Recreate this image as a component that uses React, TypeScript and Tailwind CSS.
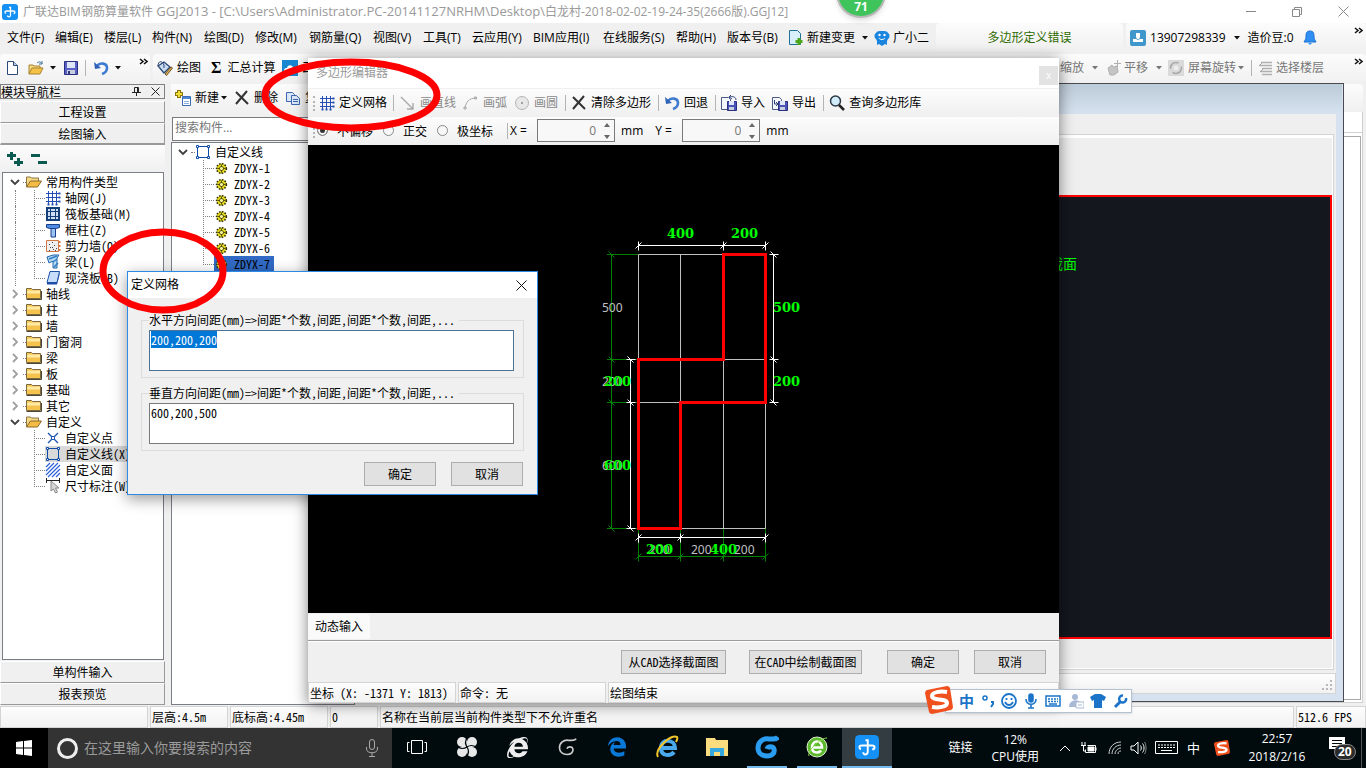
import { useEffect, useRef } from "react";
import type { ReactNode } from "react";
import { FaInternetExplorer, FaEdgeLegacy } from "react-icons/fa6";

const ui = "font-['Open_Sans','Noto_Sans_CJK_SC',sans-serif]";
const song = "font-['Noto_Sans_Mono_CJK_SC','Noto_Sans_CJK_SC',monospace]";
const bar = "bg-linear-to-b from-[#fcfcfc] to-[#f0f0f0]";
const cell = "border border-[#d4d4d4] bg-linear-to-b from-[#fdfdfd] to-[#f2f2f2]";

const menus = [
  { text: "文件(F)", w: "w-[48px]" },
  { text: "编辑(E)", w: "w-[49px]" },
  { text: "楼层(L)", w: "w-[48px]" },
  { text: "构件(N)", w: "w-[52px]" },
  { text: "绘图(D)", w: "w-[51px]" },
  { text: "修改(M)", w: "w-[54px]" },
  { text: "钢筋量(Q)", w: "w-[64px]" },
  { text: "视图(V)", w: "w-[50px]" },
  { text: "工具(T)", w: "w-[49px]" },
  { text: "云应用(Y)", w: "w-[61px]" },
  { text: "BIM应用(I)", w: "w-[70px]" },
  { text: "在线服务(S)", w: "w-[73px]" },
  { text: "帮助(H)", w: "w-[51px]" },
  { text: "版本号(B)", w: "w-[61px]" },
];

type Node = { text: string; icon?: string; children?: Node[]; selected?: boolean };

const tree: Node[] = [
  {
    text: "常用构件类型",
    children: [
      { text: "轴网(J)", icon: "grid" },
      { text: "筏板基础(M)", icon: "raft" },
      { text: "框柱(Z)", icon: "column" },
      { text: "剪力墙(Q)", icon: "wall" },
      { text: "梁(L)", icon: "beam" },
      { text: "现浇板(B)", icon: "slab" },
    ],
  },
  { text: "轴线" },
  { text: "柱" },
  { text: "墙" },
  { text: "门窗洞" },
  { text: "梁" },
  { text: "板" },
  { text: "基础" },
  { text: "其它" },
  {
    text: "自定义",
    children: [
      { text: "自定义点", icon: "point" },
      { text: "自定义线(X)", icon: "frame", selected: true },
      { text: "自定义面", icon: "hatch" },
      { text: "尺寸标注(W)", icon: "dimension" },
    ],
  },
];

const members = ["ZDYX-1", "ZDYX-2", "ZDYX-3", "ZDYX-4", "ZDYX-5", "ZDYX-6", "ZDYX-7"];

function Svg({ size = 16, children }: { size?: number; children: ReactNode }) {
  return (
    <svg width={size} height={size} viewBox="0 0 16 16" fill="none" className="shrink-0" aria-hidden="true">
      {children}
    </svg>
  );
}

function Icon({ name, size = 16 }: { name: string; size?: number }) {
  switch (name) {
    case "grid":
      return (
        <Svg size={size}>
          <path d="M3.500 1v14M7.500 1v14M11.500 1v14M1 3.500h14M1 7.500h14M1 11.500h14" stroke="#2450b4" />
          <path d="M2.500 14.500h2M6.500 14.500h2M10.500 14.500h2M14.500 2.500v2M14.500 6.500v2M14.500 10.500v2" stroke="#2450b4" strokeWidth="2" />
        </Svg>
      );
    case "raft":
      return (
        <Svg size={size}>
          <path d="M2 2h12v12H2z" fill="#cfe0f5" stroke="#153f78" strokeWidth="2" />
          <path d="M5.500 5.500h5v5h-5zM5.500 2v12M10.500 2v12M2 5.500h12M2 10.500h12" stroke="#153f78" />
        </Svg>
      );
    case "column":
      return (
        <Svg size={size}>
          <path d="M1.500 2.500h13v3l-3 1h-7l-3-1z" fill="#4f8be0" stroke="#173f8c" />
          <path d="M6 6.500h4.500V15H6z" fill="#9cc3f3" stroke="#173f8c" />
        </Svg>
      );
    case "wall":
      return (
        <Svg size={size}>
          <path d="M1.500 2.500h12v11h-12z" fill="#eeeeee" stroke="#d07844" />
          <path d="M14 4h1.500M14 8h1.500M14 12h1.500" stroke="#d07844" strokeWidth="2" />
          <path d="M4 6.500h1M7 4.500h1M9 7.500h1M5 9.500h1M8 11.500h1M4 12.500h1M11 10.500h1M10 12.500h1M7 9.500h1" stroke="#444" />
        </Svg>
      );
    case "beam":
      return (
        <Svg size={size}>
          <path d="M2 3l6-2h6l-2 3v10H8V7L4 9z" fill="#b9dcf5" stroke="#2165a8" />
          <path d="M4 5l8-3M8 8l4-3M9 13l4-4" stroke="#2d7cc4" strokeWidth="1.500" />
        </Svg>
      );
    case "slab":
      return (
        <Svg size={size}>
          <path d="M5 1.500h9.500l-2.500 11H2z" fill="#c6defa" stroke="#1d4fa8" />
          <path d="M2 12h10l2.500-10v3L12 14.500H2z" fill="#1d4fa8" />
        </Svg>
      );
    case "point":
      return (
        <Svg size={size}>
          <path d="M3 3l4 4M13 3L9 7M3 13l4-4M13 13L9 9" stroke="#1d55b0" strokeWidth="1.300" />
          <path d="M6.500 6.500h3v3h-3z" fill="#fff" stroke="#1d55b0" />
        </Svg>
      );
    case "frame":
      return (
        <Svg size={size}>
          <path d="M2.500 2.500h11v11h-11z" stroke="#0e4ca8" />
          <path d="M1.500 1.500h2v2h-2zM12.500 1.500h2v2h-2zM1.500 12.500h2v2h-2zM12.500 12.500h2v2h-2z" fill="#fff" stroke="#0e4ca8" />
        </Svg>
      );
    case "hatch":
      return (
        <Svg size={size}>
          <path d="M1 5l4-4M1 9l8-8M1 13L13 1M3 15L15 3M7 15l8-8M11 15l4-4" stroke="#2f63d8" strokeWidth="1.200" />
        </Svg>
      );
    case "dimension":
      return (
        <Svg size={size}>
          <path d="M1.500 0v5M14.500 0v5M1 2.500h14" stroke="#222" />
          <path d="M6 3v10l2.500-2 2 4 2-1-2-4h3.500z" fill="#d8d8d8" stroke="#888" />
        </Svg>
      );
    case "folder":
      return (
        <Svg size={size}>
          <path d="M.5 2.500h5l1 1h8v9H.5z" fill="#f3c34d" stroke="#7d6a3c" />
          <path d="M1 4.500h13v3H1z" fill="#ffe9a2" />
          <path d="M.5 13.500h15V5" stroke="#4a4436" />
        </Svg>
      );
    case "folder-open":
      return (
        <Svg size={size}>
          <path d="M.5 13V3h4l1 1h7v3" fill="#f7da88" stroke="#8a7440" />
          <path d="M.5 13l4-6h11l-4 6z" fill="#f3bd45" stroke="#8a6a2a" />
        </Svg>
      );
    case "open":
      return (
        <Svg size={size}>
          <path d="M1 14V5h4l1 1h6v3" fill="#f7da88" stroke="#a8822a" />
          <path d="M1 14l3-6h11l-3 6z" fill="#f5c24a" stroke="#a8822a" />
          <path d="M9 3c2-2 4-1 5 1M14 1v3h-3" stroke="#3a6f9c" />
        </Svg>
      );
    case "new":
      return (
        <Svg size={size}>
          <path d="M3.500 1.500h6l4 4v9h-10z" fill="#fff" stroke="#2b4a78" />
          <path d="M9.500 1.500v4h4" fill="#b9cce8" stroke="#2b4a78" />
        </Svg>
      );
    case "save":
      return (
        <Svg size={size}>
          <path d="M1.500 1.500h13v13h-13z" fill="#5a62c8" stroke="#2a2f80" />
          <path d="M4 2h8v6H4z" fill="#dfe6f8" />
          <path d="M4 10h8v4H4z" fill="#c8cfdf" />
          <path d="M5 11h2v3H5z" fill="#333a80" />
        </Svg>
      );
    case "undo":
      return (
        <Svg size={size}>
          <path d="M4 6c3-4 10-3 10 2 0 3-2 5-5 6" stroke="#3f7bd0" strokeWidth="2.600" />
          <path d="M1 2l1 7 6-1z" fill="#2f62b8" />
        </Svg>
      );
    case "bucket":
      return (
        <Svg size={size}>
          <path d="M1 6l6-4 6 5-6 6z" fill="#c9dcf2" stroke="#2a4774" strokeWidth="1.300" />
          <path d="M1 6c0-5 4-6 6-1v3" stroke="#2a4774" />
          <path d="M15.500 8l-6 7.500L8 14l6-7z" fill="#e8b348" stroke="#68502a" />
        </Svg>
      );
    case "cloud":
      return (
        <Svg size={size}>
          <path d="M0 0h16v16H0z" fill="#1687d0" />
          <path d="M2 11c0-3 2-3 3-3 1-4 6-3 6 0 3 0 4 4 1 5H4c-1 0-2-1-2-2z" fill="#fff" />
        </Svg>
      );
    case "create":
      return (
        <Svg size={size}>
          <path d="M4 0v8M0 4h8" stroke="#8a7410" strokeWidth="4" />
          <path d="M4 1v6M1 4h6" stroke="#f2dc3c" strokeWidth="2" />
          <path d="M7.500 6.500h8v9h-8z" fill="#fff" stroke="#3a6ab8" />
          <path d="M8 7h7v2H8z" fill="#4f86d8" />
          <path d="M9 11.500h5M9 13.500h5" stroke="#8aaee0" />
        </Svg>
      );
    case "cross":
      return (
        <Svg size={size}>
          <path d="M2 2l12 12M13 1L2 14" stroke="#333" strokeWidth="2" />
        </Svg>
      );
    case "copy":
      return (
        <Svg size={size}>
          <path d="M1.500 2.500h6l2 2v7h-8z" fill="#dbe8fa" stroke="#3d68b0" />
          <path d="M6.500 5.500h5l3 3v6h-8z" fill="#dbe8fa" stroke="#3d68b0" />
          <path d="M8 9.500h5M8 11.500h5" stroke="#3d68b0" />
        </Svg>
      );
    case "line":
      return (
        <Svg size={size}>
          <path d="M1 2l12 12M13 8v6H7" stroke="#a8a8a8" strokeWidth="1.400" />
        </Svg>
      );
    case "arc":
      return (
        <Svg size={size}>
          <path d="M2 13C3 7 6 3 13 3" stroke="#a8a8a8" />
          <path d="M1 12h2v2H1zM11.500 2h2v2h-2z" stroke="#a8a8a8" />
        </Svg>
      );
    case "circle":
      return (
        <Svg size={size}>
          <circle cx="8" cy="8" r="6.500" fill="#e8e8e8" stroke="#b4b4b4" />
          <path d="M7 7h2v2H7z" fill="#a0a0a0" />
        </Svg>
      );
    case "import":
    case "export":
      return (
        <Svg size={size}>
          <path d="M.5 2.500h7l2 2v10h-9z" fill="#f4f7fc" stroke="#4a5a84" />
          <path d="M6.500 6.500h9v9h-9z" fill="#4a52b8" stroke="#2a2f80" />
          <path d="M8 6h5v4H8z" fill="#dfe6f8" />
          <path d="M8 12h5v3H8z" fill="#c8cfdf" />
          {name === "import" ? (
            <path d="M15 5c0-3-3-4-6-3M10 0L8 2l3 2" stroke="#30427a" />
          ) : (
            <path d="M2.500 5v4h4M4 7l2 2-2 2" stroke="#30427a" />
          )}
        </Svg>
      );
    case "search":
      return (
        <Svg size={size}>
          <circle cx="6.500" cy="6" r="5" fill="#d3ecfa" stroke="#2c3a48" strokeWidth="1.500" />
          <path d="M10 10l5 5" stroke="#222" strokeWidth="2.500" />
        </Svg>
      );
    case "change":
      return (
        <Svg size={size}>
          <path d="M1.500.5h8l3 3v11h-11z" fill="#d9effc" stroke="#1f6f9c" />
          <path d="M11 8v7M7.500 11.500h7" stroke="#4fa81c" strokeWidth="3" />
        </Svg>
      );
    case "mascot":
      return (
        <Svg size={size}>
          <path d="M2 3c1-2 3-2 6-2s5 0 6 2c2 1 2 5 0 6l-1 2v4l-2-1-3 2-3-2-2 1v-4L2 9C0 8 0 4 2 3z" fill="#1a86e0" />
          <circle cx="5.500" cy="5" r="1.200" fill="#fff" />
          <circle cx="10.500" cy="5" r="1.200" fill="#fff" />
          <path d="M5 8c1 2 5 2 6 0" stroke="#fff" />
        </Svg>
      );
    case "account":
      return (
        <Svg size={size}>
          <rect width="16" height="16" rx="2" fill="#3f97cb" />
          <path d="M6 3h4v4l-1 2H7L6 7zM3 9h3l2 1 2-1h3v3H3z" fill="#fff" />
        </Svg>
      );
    case "bell":
      return (
        <Svg size={size}>
          <path d="M8 1c4 0 4 3 4 6 0 2 1 3 2 5H2c1-2 2-3 2-5 0-3 0-6 4-6z" fill="#2f8ff5" stroke="#1b6fcf" />
          <path d="M6 13h4l-2 2z" fill="#2f8ff5" />
        </Svg>
      );
    case "pan":
      return (
        <Svg size={size}>
          <path d="M2 8l4-3 1 2 4-1 1 6-4 3H4z" fill="#c4c4c4" stroke="#b0b0b0" />
          <path d="M11.500 0v7M8 3.500h7" stroke="#b0b0b0" />
        </Svg>
      );
    case "rotate":
      return (
        <Svg size={size}>
          <path d="M0 0h16v16H0z" fill="#dadada" />
          <circle cx="8" cy="8" r="5.500" stroke="#a8a8a8" strokeWidth="1.500" strokeDasharray="12 4" />
          <path d="M6 6h4v4H6z" fill="#eee" />
        </Svg>
      );
    case "floors":
      return (
        <Svg size={size}>
          <path d="M3 2.500h11M1 5.500h13M4 8.500h10M2 11.500h12M4 14.500h10" stroke="#b0b0b0" strokeWidth="1.500" />
          <path d="M4 3L1 6M5 9l-3 3" stroke="#a8a8a8" />
        </Svg>
      );
    case "app":
      return (
        <Svg size={size}>
          <rect width="16" height="16" rx="3" fill="#1590f5" />
          <path d="M7 3.500h1.500V11c0 2.500-3 2.500-3 .5M4 9.500C2.500 9 2.500 7 4.500 7h7c2 0 2 2.500 0 2.500" stroke="#fff" strokeWidth="1.300" />
        </Svg>
      );
    case "gear":
      return (
        <Svg size={size}>
          <circle cx="8" cy="8" r="6" fill="#e8dc20" stroke="#3c3a08" strokeWidth="2" strokeDasharray="2 1.500" />
          <circle cx="8" cy="8" r="2.500" fill="#fff9a0" stroke="#3c3a08" />
          <path d="M8 3v3M8 10v3M3 8h3M10 8h3" stroke="#3c3a08" />
        </Svg>
      );
    default:
      return null;
  }
}

function Caret({ dim = false }: { dim?: boolean }) {
  return (
    <svg width="6" height="4" viewBox="0 0 6 4" className="shrink-0" aria-hidden="true">
      <path d="M0 0h6L3 3.500z" fill={dim ? "#777" : "#111"} />
    </svg>
  );
}

function More() {
  return (
    <svg width="9" height="8" viewBox="0 0 9 8" fill="none" className="shrink-0" aria-hidden="true">
      <path d="M1 1l3 2.500L1 6M5 1l3 2.500L5 6" stroke="#111" strokeWidth="1.500" />
    </svg>
  );
}

function Sep() {
  return <span className="h-4 w-px shrink-0 bg-[#b4b4b4]" />;
}

function Grip() {
  return <span className="h-[15px] w-0 shrink-0 border-l-2 border-dotted border-[#b4b4b4]" />;
}

function Chevron({ open }: { open: boolean }) {
  return (
    <svg width="10" height="10" viewBox="0 0 10 10" fill="none" className="shrink-0" aria-hidden="true">
      <path d={open ? "M1 3l4 4 4-4" : "M3 1l4 4-4 4"} stroke={open ? "#404040" : "#a0a0a0"} strokeWidth="1.800" />
    </svg>
  );
}

function Elbow({ last }: { last: boolean }) {
  return (
    <svg width="11" height="16" viewBox="0 0 11 16" fill="none" className="shrink-0" aria-hidden="true">
      <path d={last ? "M.5 0v8.500" : "M.5 0v16"} stroke="#808080" strokeDasharray="1 1" />
      <path d="M0 8.500h11" stroke="#808080" strokeDasharray="1 1" />
    </svg>
  );
}

function Tool({ icon, text, dim = false }: { icon: string; text: string; dim?: boolean }) {
  return (
    <button className={`flex shrink-0 items-center gap-1 whitespace-nowrap ${dim ? "text-[#8a8a8a]" : "text-black"}`}>
      <Icon name={icon} />
      {text}
    </button>
  );
}

function TitleBar() {
  return (
    <header className="flex h-[23px] items-center bg-white pl-[2px] text-[#999]">
      <Icon name="app" />
      <h1 className="ml-[5px] flex-1 whitespace-nowrap">
        广联达BIM钢筋算量软件
        <span className="text-[13px]"> GGJ2013 - [C:\Users\Administrator.PC-20141127NRHM\Desktop\</span>
        白龙村-2018-02-02-19-24-35(2666版).GGJ12]
      </h1>
      <div className="flex h-[20px]">
        <button aria-label="最小化" className="flex w-[46px] items-center justify-center">
          <span className="h-px w-[10px] bg-[#888]" />
        </button>
        <button aria-label="还原" className="flex w-[46px] items-center justify-center">
          <svg width="10" height="10" fill="none" stroke="#888"><path d="M.5 2.500h7v7h-7zM2.500 2.500v-2h7v7h-2" /></svg>
        </button>
        <button aria-label="关闭" className="flex w-[46px] items-center justify-center">
          <svg width="11" height="11" fill="none" stroke="#888"><path d="M.5.5l10 10M10.500.5l-10 10" /></svg>
        </button>
      </div>
    </header>
  );
}

function MenuBar() {
  return (
    <nav className="flex h-[31px] items-center bg-[#f0f0f0] pb-px pl-[7px] whitespace-nowrap">
      {menus.map((m) => (
        <button key={m.text} className={`shrink-0 text-left ${m.w}`}>
          {m.text}
        </button>
      ))}
      <button className="flex items-center gap-[3px]">
        <Icon name="change" />
        新建变更
        <span className="ml-1"><Caret /></span>
      </button>
      <button className="ml-[6px] flex items-center gap-[3px]">
        <Icon name="mascot" />
        广小二
      </button>
      <div className={`ml-[7px] flex h-full w-[187px] items-center justify-center rounded text-[#2f6b00] ${bar}`}>
        多边形定义错误
      </div>
      <div className={`ml-[3px] flex h-full flex-1 items-center rounded pl-1 ${bar}`}>
        <button className="flex items-center gap-1">
          <Icon name="account" />
          <span>13907298339</span>
          <span className="ml-1"><Caret /></span>
        </button>
        <button className="ml-2 flex items-center gap-2">
          造价豆:0
          <Icon name="bell" />
        </button>
        <span className="ml-auto self-start pt-1 pr-[3px]"><More /></span>
      </div>
    </nav>
  );
}

function MainToolbar() {
  return (
    <div className="flex h-[30px] items-center bg-[#f0f0f0] whitespace-nowrap">
      <div className={`flex h-full w-[150px] shrink-0 items-center rounded pb-[3px] pl-1 ${bar}`}>
        <button aria-label="新建文件"><Icon name="new" /></button>
        <button aria-label="打开" className="ml-2 flex items-center gap-[6px]"><Icon name="open" /><Caret /></button>
        <button aria-label="保存" className="mr-[6px] ml-[7px]"><Icon name="save" /></button>
        <Sep />
        <button aria-label="撤销" className="ml-[7px] flex items-center gap-[6px]"><Icon name="undo" /><Caret /></button>
        <span className="mr-[2px] ml-auto self-start pt-1"><More /></span>
      </div>
      <div className={`ml-[3px] flex h-full flex-1 items-center rounded pb-[3px] pl-1 ${bar}`}>
        <Tool icon="bucket" text="绘图" />
        <button className="ml-[10px] flex items-center gap-[6px]">
          <span className="font-['Liberation_Serif',serif] text-[16px] font-bold">Σ</span>
          汇总计算
        </button>
        <button className="ml-[6px] flex items-center gap-1"><Icon name="cloud" />云计算</button>
        <div className="ml-auto flex items-center pr-[42px] text-[#777]">
          <button className="flex items-center gap-2">缩放<Caret dim /></button>
          <button className="ml-2 flex items-center gap-2"><span className="flex items-center gap-[2px]"><Icon name="pan" />平移</span><Caret dim /></button>
          <button className="mr-[7px] ml-[6px] flex items-center gap-[2px]"><span className="flex items-center gap-1"><Icon name="rotate" />屏幕旋转</span><Caret dim /></button>
          <Sep />
          <button className="ml-[6px] flex items-center gap-[2px]"><Icon name="floors" />选择楼层</button>
        </div>
      </div>
      <span className="-ml-3 self-start pt-1 pr-[3px]"><More /></span>
    </div>
  );
}

function Navigator() {
  const tab = "h-[22px] border border-t-white border-l-white border-r-[#999] border-b-[#999] bg-[#f0f0f0]";
  return (
    <aside className={`flex w-[165px] shrink-0 flex-col bg-[#f0f0f0] ${song}`}>
      <div className="flex h-[15px] items-center border border-[#808080] pr-1 leading-[14px]">
        <h2 className="flex-1">模块导航栏</h2>
        <svg width="9" height="9" fill="none" stroke="#222"><path d="M2.500 5V.5h4V5M0 5.500h9M4.500 5.500V9M5.500 1v4" /></svg>
        <svg width="9" height="9" className="ml-[10px]" fill="none" stroke="#222"><path d="M.5.5l8 8M8.500.5l-8 8" /></svg>
      </div>
      <button className={`mt-[2px] ${tab}`}>工程设置</button>
      <button className={`${tab} border-b-2`}>绘图输入</button>
      <div className={`flex h-[27px] items-center gap-2 pl-[7px] ${bar}`}>
        <button aria-label="全部展开">
          <svg width="16" height="16" fill="none" stroke="#0b5a50" strokeWidth="3"><path d="M4.500 1v8M0 4.500h9M11.500 7v8M7 11.500h9" /></svg>
        </button>
        <button aria-label="全部折叠">
          <svg width="16" height="16" fill="none" stroke="#0b5a50" strokeWidth="3"><path d="M0 4.500h9M7 11.500h9" /></svg>
        </button>
      </div>
      <ul className="mr-px ml-[2px] flex-1 overflow-hidden border border-[#7a7f86] bg-white pt-[1px] whitespace-nowrap">
        {tree.map((n, i) => (
          <li key={n.text + i}>
            <div className="flex h-4 items-center pl-[7px]">
              <Chevron open={!!n.children} />
              <span className="ml-[3px] w-[3px] border-t border-dotted border-[#808080]" />
              <Icon name={n.children ? "folder-open" : "folder"} />
              <span className="ml-1">{n.text}</span>
            </div>
            {n.children && (
              <ul>
                {n.children.map((c, k) => (
                  <li key={c.text} className="flex h-4 pl-[12px]">
                    <span className={`w-[19px] shrink-0 ${i === 0 ? "border-l border-dotted border-[#808080]" : ""}`} />
                    <Elbow last={k === n.children!.length - 1} />
                    <span className={`flex items-center gap-1 leading-4 ${c.selected ? "bg-[#d9d9d9]" : ""}`}>
                      <Icon name={c.icon!} />
                      {c.text}
                    </span>
                  </li>
                ))}
              </ul>
            )}
          </li>
        ))}
      </ul>
      <button className={`mt-px ${tab}`}>单构件输入</button>
      <button className={`mb-px ${tab}`}>报表预览</button>
    </aside>
  );
}

function Members() {
  return (
    <section className="ml-[6px] flex w-[184px] shrink-0 flex-col">
      <div className={`flex h-[29px] items-center overflow-hidden pb-[2px] pl-1 ${bar}`}>
        <Tool icon="create" text="新建" />
        <span className="ml-[2px]"><Caret /></span>
        <span className="ml-[7px]"><Tool icon="cross" text="删除" /></span>
        <span className="ml-[7px]"><Tool icon="copy" text="复制" /></span>
      </div>
      <input
        aria-label="搜索构件"
        placeholder="搜索构件..."
        className="mt-1 ml-px h-6 border border-[#7a7a7a] bg-white px-[2px] pb-1 placeholder:text-[#777]"
      />
      <div className={`mt-px mb-px flex-1 border border-[#7a7f86] bg-white pt-px ${song}`}>
        <div className="flex h-4 items-center pl-[6px]">
          <Chevron open />
          <span className="ml-[3px] w-1 border-t border-dotted border-[#808080]" />
          <Icon name="frame" />
          <span className="ml-1">自定义线</span>
        </div>
        <ul>
          {members.map((m, i) => (
            <li key={m} className="flex h-4 pl-[31px]">
              <Elbow last={i === members.length - 1} />
              <span className={`flex items-center gap-[6px] pr-1 pl-px leading-4 ${i === 6 ? "bg-[#316ac5]" : ""}`}>
                <Icon name="gear" size={13} />
                {m}
              </span>
            </li>
          ))}
        </ul>
      </div>
    </section>
  );
}

function Backdrop() {
  return (
    <section className="mr-[3px] ml-[3px] flex flex-1 flex-col pb-[3px]">
      <div className={`h-[28px] rounded ${bar}`} />
      <div className="flex flex-1 flex-col border-r border-b border-[#d0d0d0] bg-white">
        <div className="h-[21px] border-b border-[#d0d0d0]" />
        <div className="mt-[3px] mr-px mb-[2px] flex-1 border border-[#a8a8a8] bg-white" />
      </div>
    </section>
  );
}

function SectionWindow() {
  return (
    <section className="absolute top-[83px] right-[22px] bottom-[66px] left-[1000px] flex flex-col border border-[#4a4a50] bg-[#d6e2f0] pr-[7px] pb-[7px]">
      <div className="-mr-[6px] h-[30px] bg-linear-to-b from-[#bccbd8] to-[#d6e2f0]" />
      <div className="flex flex-1 flex-col bg-[#efefef] pt-5">
        <div className="mr-[2px] flex flex-1 flex-col border border-[#d4d4d4] bg-white pt-[3px] pr-px pb-px">
          <div className="flex flex-1 flex-col bg-[#efefef] pt-[57px] pb-[29px]">
            <div className="flex-1 border-2 border-[#f00] bg-[#14171e] pt-[57px] pl-[45px] text-[14px] leading-5 text-[#0f0]">
              截面
            </div>
          </div>
        </div>
      </div>
      <div className="bg-[#efefef] pt-[3px]">
        <div className={`flex h-[21px] items-end justify-end p-[2px] ${cell}`}>
          <svg width="11" height="11" fill="#b8b8b8"><path d="M8 0h2v2H8zM4 4h2v2H4zM8 4h2v2H8zM0 8h2v2H0zM4 8h2v2H4zM8 8h2v2H8z" /></svg>
        </div>
      </div>
    </section>
  );
}

function Ticks({ points, color, flip = false }: { points: number[][]; color: string; flip?: boolean }) {
  return (
    <g stroke={color}>
      {points.map(([x, y]) => (
        <path key={`${x},${y}`} d={flip ? `M${x - 4} ${y}h9M${x - 3} ${y - 3}l6 6` : `M${x} ${y - 4}v9M${x - 3} ${y + 3}l6-6`} />
      ))}
    </g>
  );
}

function Drawing() {
  return (
    <svg viewBox="308 145 751 468" className="h-[468px] w-full bg-black" fill="none" role="img" aria-label="多边形截面">
      <path d="M611.5 254v275M607 254.500h31M607 359.500h31M607 402.500h31M607 528.500h31M638 556.500h128M638.500 528v32M680.500 528v32M723.500 528v32M765.500 528v32" stroke="#008000" />
      <Ticks color="#008000" points={[[638.5, 556.5], [680.5, 556.5], [723.5, 556.5], [765.5, 556.5]]} />
      <Ticks color="#008000" flip points={[[611.5, 254.5], [611.5, 359.5], [611.5, 402.5], [611.5, 528.5]]} />
      <path d="M638.5 254.500h127v274h-127zM680.500 254v274M723.500 254v274M638 359.500h127M638 402.500h127" stroke="#c0c0c0" />
      <path d="M638 245.500h128M773.500 254v149M630.500 359v170M638 537.500h128" stroke="#fff" />
      <Ticks color="#fff" points={[[638.5, 245.5], [723.5, 245.5], [765.5, 245.5], [638.5, 537.5], [680.5, 537.5], [765.5, 537.5]]} />
      <Ticks color="#fff" flip points={[[773.5, 254.5], [773.5, 359.5], [773.5, 402.5], [630.5, 359.5], [630.5, 402.5], [630.5, 528.5]]} />
      <path d="M723.500 254.500h42v148h-85v126h-42v-169h85z" stroke="#f00" strokeWidth="3" />
      <g fill="#c0c0c0" className="font-['Noto_Sans',sans-serif] text-[12px]">
        <text x="602" y="312">500</text>
        <text x="602" y="386">200</text>
        <text x="602" y="470">600</text>
        <text x="649" y="554">200</text>
        <text x="691" y="554">200</text>
        <text x="734" y="554">200</text>
      </g>
      <g fill="#0f0" className="font-['DejaVu_Serif',serif] text-[13px] font-bold">
        <text x="667" y="238">400</text>
        <text x="731" y="238">200</text>
        <text x="773" y="312">500</text>
        <text x="773" y="386">200</text>
        <text x="604" y="386">200</text>
        <text x="604" y="470">600</text>
        <text x="646" y="554">200</text>
        <text x="710" y="554">400</text>
      </g>
    </svg>
  );
}

function Coord({ label }: { label: string }) {
  return (
    <label className="flex items-center gap-[6px]">
      <span className="w-[21px]">{label} =</span>
      <span className="flex h-[23px] w-[78px] items-center border border-[#7a7a7a] bg-[#f8f8f8] pr-1">
        <input defaultValue="0" className="w-0 flex-1 bg-transparent pr-2 text-right text-[#777]" />
        <svg width="6" height="16" fill="#666"><path d="M0 4h6L3 0zM0 12h6L3 16z" /></svg>
      </span>
      mm
    </label>
  );
}

function Radio({ text, checked = false }: { text: string; checked?: boolean }) {
  return (
    <label className="flex items-center gap-[9px]">
      <input
        type="radio"
        name="mode"
        defaultChecked={checked}
        className="size-[11px] appearance-none rounded-full border border-[#888] bg-[#f8f8f8] checked:bg-[#333] checked:shadow-[inset_0_0_0_2px_#f8f8f8]"
      />
      {text}
    </label>
  );
}

const winButton = "h-6 border border-[#adadad] bg-[#e1e1e1]";

function PolygonEditor() {
  return (
    <section className="absolute top-[58px] left-[308px] w-[751px] bg-[#f0f0f0] whitespace-nowrap shadow-[0_2px_14px_rgba(0,0,0,0.5)]">
      <div className="flex h-[30px] items-center justify-between bg-white pr-px pl-2 text-[#999]">
        <h2>多边形编辑器</h2>
        <button aria-label="关闭编辑器" className="mt-1 size-[19px] bg-[#e3e3e3] text-[10px] leading-[14px] text-white">x</button>
      </div>
      <div className={`mt-px flex h-[28px] items-center pl-[5px] ${bar}`}>
        <Grip />
        <span className="mr-[6px] ml-1"><Tool icon="grid" text="定义网格" /></span>
        <Sep />
        <span className="ml-[6px]"><Tool icon="line" text="画直线" dim /></span>
        <span className="ml-[7px]"><Tool icon="arc" text="画弧" dim /></span>
        <span className="mr-[7px] ml-[7px]"><Tool icon="circle" text="画圆" dim /></span>
        <Sep />
        <span className="mr-[7px] ml-[5px]"><Tool icon="cross" text="清除多边形" /></span>
        <Sep />
        <span className="mr-[7px] ml-[5px]"><Tool icon="undo" text="回退" /></span>
        <Sep />
        <span className="ml-[5px]"><Tool icon="import" text="导入" /></span>
        <span className="mr-[7px] ml-[7px]"><Tool icon="export" text="导出" /></span>
        <Sep />
        <span className="ml-[5px]"><Tool icon="search" text="查询多边形库" /></span>
      </div>
      <div className={`flex h-[28px] items-center pb-px pl-[5px] ${bar}`}>
        <Grip />
        <div className={`ml-[2px] flex items-center gap-[10px] ${song}`}>
          <Radio text="不偏移" checked />
          <Radio text="正交" />
          <Radio text="极坐标" />
        </div>
        <div className="ml-[14px] flex items-center gap-[2px]">
          <Sep />
          <Coord label="X" />
        </div>
        <div className="ml-3">
          <Coord label="Y" />
        </div>
      </div>
      <Drawing />
      <div className="flex h-[28px] items-start border-b border-[#9a9a9a] pt-px">
        <button className="h-[25px] rounded-t bg-[#fafafa] px-[7px]">动态输入</button>
      </div>
      <div className={`flex h-[41px] items-center justify-end border-t border-white pr-[13px] ${song}`}>
        <button className={`${winButton} w-[105px]`}>从CAD选择截面图</button>
        <button className={`${winButton} ml-[23px] w-[113px]`}>在CAD中绘制截面图</button>
        <button className={`${winButton} ml-[25px] w-[72px]`}>确定</button>
        <button className={`${winButton} ml-[15px] w-[72px]`}>取消</button>
      </div>
      <div className={`flex h-[21px] gap-[2px] ${song}`}>
        <div className={`w-[148px] pl-px leading-5 ${cell}`}>坐标 (X: -1371 Y: 1813)</div>
        <div className={`w-[148px] pl-px leading-5 ${cell}`}>命令: 无</div>
        <div className={`flex-1 pl-px leading-5 ${cell}`}>绘图结束</div>
      </div>
    </section>
  );
}

function GridDialog() {
  const first = useRef<HTMLTextAreaElement>(null);

  useEffect(() => {
    first.current?.focus();
    first.current?.select();
  }, []);

  const box = "mt-[2px] block h-[41px] w-full resize-none border bg-white px-px py-px leading-[15px] outline-none selection:bg-[#0078d7] selection:text-white";
  return (
    <section
      role="dialog"
      aria-label="定义网格"
      className={`absolute top-[271px] left-[127px] w-[411px] border border-[#2a8ae6] bg-[#f0f0f0] whitespace-nowrap shadow-[0_4px_14px_rgba(0,0,0,0.4)] ${song}`}
    >
      <div className={`flex h-[26px] items-center justify-between bg-white pr-[10px] pl-[3px] ${ui}`}>
        <h2>定义网格</h2>
        <button aria-label="关闭">
          <svg width="11" height="11" fill="none" stroke="#111"><path d="M.5.5l10 10M10.500.5l-10 10" /></svg>
        </button>
      </div>
      <div className="px-[13px] pt-[14px] pb-2">
        <fieldset className="h-[66px] border border-[#dcdcdc] pr-[9px] pl-[7px]">
          <legend className="pr-1 leading-4">
            <label htmlFor="horizontal">水平方向间距(mm)=&gt;间距*个数,间距,间距*个数,间距,...</label>
          </legend>
          <textarea id="horizontal" ref={first} defaultValue="200,200,200" className={`${box} border-[#4c7396]`} />
        </fieldset>
        <fieldset className="mt-[7px] h-[66px] border border-[#dcdcdc] pr-[9px] pl-[7px]">
          <legend className="pr-1 leading-4">
            <label htmlFor="vertical">垂直方向间距(mm)=&gt;间距*个数,间距,间距*个数,间距,...</label>
          </legend>
          <textarea id="vertical" defaultValue="600,200,500" className={`${box} border-[#7a7a7a]`} />
        </fieldset>
        <div className="mt-[11px] flex justify-end gap-[15px] pr-px">
          <button className={`${winButton} w-[72px]`}>确定</button>
          <button className={`${winButton} w-[72px]`}>取消</button>
        </div>
      </div>
    </section>
  );
}

function SogouMark({ size }: { size: number }) {
  return (
    <svg width={size} height={size} viewBox="0 0 28 28" fill="none" className="shrink-0" aria-hidden="true">
      <path d="M2 4L22 0q2 0 3 2l3 19q0 2-2 3L7 28q-2 0-3-2L0 7q0-2 2-3z" fill="#f0501e" />
      <path d="M22 6C15 5 7 6 7 10c0 5 15 2 15 7 0 4-9 5-15 4" stroke="#fff" strokeWidth="4" />
    </svg>
  );
}

function InputMethodBar() {
  return (
    <div className="absolute top-[689px] left-[945px] flex h-6 w-[187px] items-center justify-between border border-[#b4c2d2] bg-white pr-[3px] pl-[13px] text-[#1b74c8] shadow">
      <span className="absolute -top-1 -left-[21px]"><SogouMark size={28} /></span>
      <span className="text-[15px] leading-5 font-bold">中</span>
      <svg width="14" height="14" fill="none" stroke="currentColor" strokeWidth="1.500"><circle cx="4" cy="4" r="2" /><path d="M10 8h2v2l-2 3" strokeWidth="2" /></svg>
      <svg width="16" height="16" fill="none" stroke="currentColor" strokeWidth="1.800"><circle cx="8" cy="8" r="7" /><path d="M5.500 5v2M10.500 5v2M4 9c2 4 6 4 8 0" /></svg>
      <svg width="14" height="16" fill="none" stroke="currentColor" strokeWidth="1.600"><rect x="5" y="1" width="4" height="8" rx="2" fill="currentColor" /><path d="M2 6c0 7 10 7 10 0M7 11v4M4 15h6" /></svg>
      <svg width="16" height="14" fill="none" stroke="currentColor" strokeWidth="1.500"><rect x="1" y="2" width="14" height="10" /><path d="M3 5h10M3 7.500h10" strokeDasharray="2 1" /><path d="M4 10h8" /></svg>
      <svg width="16" height="16" fill="#a9b8d4"><circle cx="7" cy="4" r="3" /><path d="M1 14c0-8 11-8 11-4v4z" /><path d="M8 9h8v6H8z" fill="#fff" stroke="#a9b8d4" /><path d="M10 12h4" stroke="#a9b8d4" /></svg>
      <svg width="16" height="14" fill="currentColor"><path d="M5 0h6l5 3-2 4-2-1v8H4V6L2 7 0 3z" /></svg>
      <svg width="15" height="15" fill="none" stroke="currentColor"><path d="M2 13l6-6" strokeWidth="3" /><path d="M13 4a3.500 3.500 0 1 1-3-2.500" strokeWidth="2.500" /></svg>
    </div>
  );
}

function StatusBar() {
  return (
    <footer className={`flex h-[22px] gap-[2px] bg-[#f0f0f0] leading-5 whitespace-nowrap ${song}`}>
      <div className={`w-[148px] ${cell}`} />
      <div className={`w-[78px] pl-px ${cell}`}>层高:4.5m</div>
      <div className={`w-[98px] pl-px ${cell}`}>底标高:4.45m</div>
      <div className={`w-[48px] pl-px ${cell}`}>0</div>
      <div className={`flex-1 pl-px ${cell}`}>名称在当前层当前构件类型下不允许重名</div>
      <div className={`w-[70px] pl-px ${cell}`}>512.6 FPS</div>
    </footer>
  );
}

function Task({ label, children, running = false, active = false }: { label: string; children: ReactNode; running?: boolean; active?: boolean }) {
  return (
    <button aria-label={label} className={`flex w-[50px] shrink-0 flex-col items-center ${active ? "bg-[#333c40]" : ""}`}>
      <span className="flex flex-1 items-center">{children}</span>
      <span className={`h-[2px] ${running ? "bg-[#76b9ed]" : ""} ${active ? "w-full" : "w-10"}`} />
    </button>
  );
}

function Swirl({ color, width, size }: { color: string; width: number; size: number }) {
  return (
    <svg width={size} height={size} viewBox="0 0 24 24" fill="none" stroke={color} strokeWidth={width}>
      <path d="M23 2c-2 3-5 2-9 2-6-1-11 3-11 9 0 5 4 8 9 8s8-3 7-7c-1-3-6-3-7 0" />
    </svg>
  );
}

function Taskbar() {
  return (
    <footer className="flex h-10 bg-[#010b0e] text-white">
      <button aria-label="开始" className="flex w-12 shrink-0 items-center justify-center bg-black">
        <svg width="16" height="16" fill="#fff"><path d="M0 2l7-1v6.500H0zM8 1l8-1v7.500H8zM0 8.500h7V15l-7-1zM8 8.500h8V16l-8-1z" /></svg>
      </button>
      <label className="flex w-[344px] shrink-0 items-center bg-[#333] pl-[9px]">
        <span className="mr-[6px] size-[21px] rounded-full border-3 border-[#eee]" />
        <input
          aria-label="搜索"
          placeholder="在这里输入你要搜索的内容"
          className="w-0 flex-1 bg-transparent text-[14px] text-white placeholder:text-[#9a9a9a]"
        />
        <svg width="12" height="18" className="mr-[14px]" fill="none" stroke="#aaa"><rect x="3.500" y=".5" width="5" height="10" rx="2.500" /><path d="M.5 8v2c0 5 11 5 11 0V8M6 14v3M3 17.500h6" /></svg>
      </label>
      <Task label="任务视图">
        <svg width="20" height="16" fill="none" stroke="#fff"><path d="M4.500 1.500h11v13h-11zM2.500 3.500h-2v9h2M17.500 3.500h2v9h-2" /></svg>
      </Task>
      <Task label="花瓣">
        <svg width="22" height="22" fill="none">
          <g fill="#e8e8e8"><circle cx="6" cy="6" r="5" /><circle cx="16" cy="6" r="5" /><circle cx="6" cy="16" r="5" /><circle cx="16" cy="16" r="5" /><path d="M6 5h10v12H6z" /></g>
          <path d="M11 11c-2-3-2-6 0-9M11 11c3-2 6-2 9 0M11 11c2 3 2 6 0 9M11 11c-3 2-6 2-9 0" stroke="#010b0e" strokeWidth="1.200" />
        </svg>
      </Task>
      <Task label="浏览器"><FaInternetExplorer size={21} color="#eee" /></Task>
      <Task label="广联达"><Swirl color="#ccc" width={2} size={20} /></Task>
      <Task label="Edge"><FaEdgeLegacy size={20} color="#0a78d7" /></Task>
      <Task label="Internet Explorer">
        <svg width="24" height="24" viewBox="0 0 24 24" fill="none"><path d="M6 13h14c0-9-14-10-14 0 0 9 10 8 13 4" stroke="#4aa8ec" strokeWidth="4" /><path d="M3 22C-1 15 15-1 22 2c1 1 0 3-1 5" stroke="#f3c62c" strokeWidth="2" /></svg>
      </Task>
      <Task label="文件资源管理器">
        <svg width="22" height="18" fill="none"><path d="M0 0h9l1 2h12v16H0z" fill="#fbdc7e" /><path d="M4 18v-8h14v8h-4v-4H8v4z" fill="#35a8e0" /></svg>
      </Task>
      <Task label="广联达GWS" running><Swirl color="#2b9df0" width={5} size={24} /></Task>
      <Task label="安全浏览器" running>
        <svg width="22" height="22" viewBox="0 0 22 22" fill="none"><circle cx="11" cy="11" r="10" fill="#5cb82c" stroke="#dff0d0" /><path d="M6 11.500h10c0-8-10-8-10 0 0 6 7 6 9 3" stroke="#fff" strokeWidth="2.500" /><path d="M3 20C1 15 14 2 21 2" stroke="#8fe04a" /></svg>
      </Task>
      <Task label="GGJ2013" running active><Icon name="app" size={24} /></Task>
      <div className="ml-auto flex items-center">
        <span>链接</span>
        <div className="ml-[19px] text-center leading-[17px]">12%<br />CPU使用</div>
        <svg width="12" height="7" className="ml-5" fill="none" stroke="#fff"><path d="M1 6l5-5 5 5" /></svg>
        <svg width="16" height="12" className="ml-[10px]" fill="none" stroke="#fff"><path d="M6.500 3.500h8v7h-10v-3M15 5.500v3M1 0v3M4 0v3M0 3.500h5M2.500 4v5h2" /><path d="M7 5h6v4H7z" fill="#fff" /></svg>
        <svg width="14" height="14" className="ml-[11px]" fill="none" stroke="#ccc"><path d="M1 13C1 6 6 1 13 1M4 13c0-5 4-9 9-9M7 13c0-3 3-6 6-6M10 13c0-2 1-3 3-3" /></svg>
        <svg width="17" height="14" className="ml-2" fill="none" stroke="#fff"><path d="M1 5h3l4-4v12L4 9H1zM10.500 4.500c1 1 1 4 0 5M12.500 2.500c2 2 2 7 0 9" /><path d="M14.500 1c2 3 2 9 0 12" stroke="#888" /></svg>
        <svg width="23" height="14" className="ml-2" fill="none" stroke="#fff"><path d="M.5.5h22v12H.5z" /><path d="M3 4h17M3 6.500h17" strokeDasharray="2 1" /><path d="M6 9.500h11" /></svg>
        <span className="ml-[9px] text-[13px]">中</span>
        <span className="ml-[14px]"><SogouMark size={16} /></span>
        <div className="ml-[17px] w-[60px] text-center leading-[18px]">22:57<br />2018/2/16</div>
        <button aria-label="20 条通知" className="relative mr-[14px] ml-[22px] pb-1">
          <svg width="18" height="18" fill="none"><path d="M0 0h16v12H9l-3 4v-4H0z" fill="#fff" /><path d="M3 3.500h10M3 6.500h10M3 9.500h6" stroke="#010b0e" /></svg>
          <span className="absolute top-[7px] left-[5px] rounded-full border border-[#888] bg-[#2b2b2b] px-[3px] text-[12px] leading-[14px] font-bold">20</span>
        </button>
        <span className="mr-1 h-10 w-px bg-[#555]" />
      </div>
    </footer>
  );
}

export default function App() {
  return (
    <div className={`relative flex min-h-screen flex-col overflow-hidden bg-[#f0f0f0] text-[12px] leading-4 text-black ${ui}`}>
      <TitleBar />
      <MenuBar />
      <MainToolbar />
      <main className="flex flex-1">
        <Navigator />
        <Members />
        <Backdrop />
      </main>
      <StatusBar />
      <Taskbar />

      <SectionWindow />
      <PolygonEditor />
      <GridDialog />
      <InputMethodBar />

      <div className="absolute -top-8 left-[836px] flex size-[50px] items-end justify-center rounded-full border-2 border-[#b8b8b8] bg-[#3fc45c] pb-[3px] text-[12px] leading-3 font-bold text-white shadow-md">
        71
      </div>
      <svg width="460" height="330" className="pointer-events-none absolute top-0 left-0" fill="none" stroke="#f00" strokeWidth="7" aria-hidden="true">
        <ellipse cx="351" cy="95" rx="86" ry="33" />
        <ellipse cx="163" cy="271" rx="60" ry="39" />
      </svg>
    </div>
  );
}
